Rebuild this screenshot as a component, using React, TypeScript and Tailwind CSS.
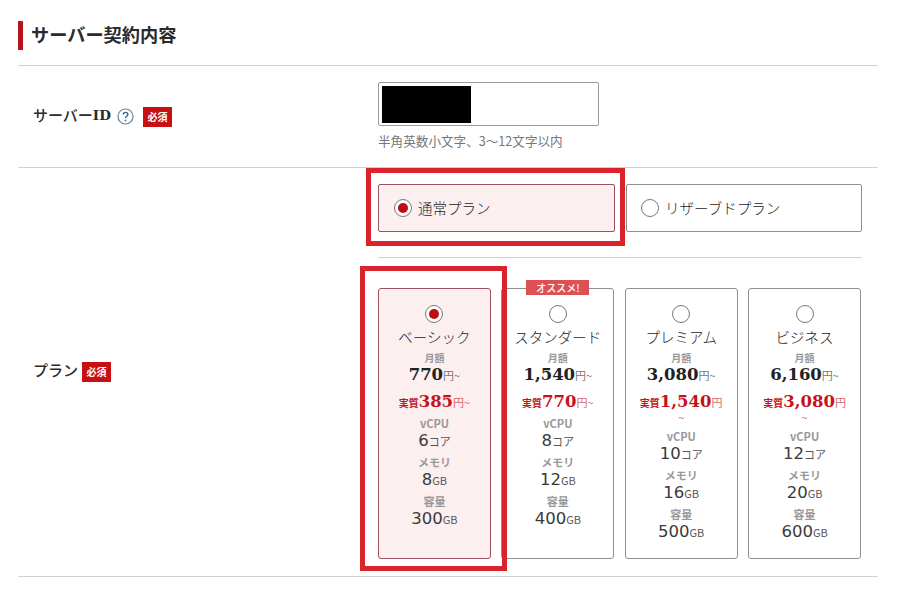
const jp = "font-['Noto_Sans_CJK_JP',sans-serif]";

function Required() {
  return (
    <span className="inline-flex h-[20px] w-[29px] items-center justify-center bg-[#c80f12] text-[10px] font-bold leading-none text-white">
      必須
    </span>
  );
}

function Radio({ checked }: { checked?: boolean }) {
  return (
    <span className="flex h-[18px] w-[18px] shrink-0 items-center justify-center rounded-full border border-[#777] bg-white">
      {checked && <span className="h-[10px] w-[10px] rounded-full bg-[#c00d14]" />}
    </span>
  );
}

type Plan = {
  name: string;
  monthly: string;
  real: string;
  cpu: string;
  mem: string;
  disk: string;
  checked?: boolean;
  badge?: boolean;
  wrapTilde?: boolean;
};

const plans: Plan[] = [
  { name: "ベーシック", monthly: "770", real: "385", cpu: "6", mem: "8", disk: "300", checked: true },
  { name: "スタンダード", monthly: "1,540", real: "770", cpu: "8", mem: "12", disk: "400", badge: true },
  { name: "プレミアム", monthly: "3,080", real: "1,540", cpu: "10", mem: "16", disk: "500", wrapTilde: true },
  { name: "ビジネス", monthly: "6,160", real: "3,080", cpu: "12", mem: "20", disk: "600", wrapTilde: true },
];

function Spec({ label, value, unit }: { label: string; value: string; unit: string }) {
  return (
    <>
      <div className="mt-[3px] h-[17px] text-[11px] font-bold leading-[17px] text-[#999]">{label}</div>
      <div className="h-[19px] whitespace-nowrap font-['DejaVu_Sans',sans-serif] text-[16.5px] leading-[17px] text-[#3a3a3a]">
        {value}
        <span className={`text-[11px] text-[#555] ${jp}`}>{unit}</span>
      </div>
    </>
  );
}

function PlanCard({ plan }: { plan: Plan }) {
  const on = plan.checked;
  return (
    <div
      className={`relative h-[271px] rounded-[3px] border px-[10px] pt-[16px] text-center ${
        on ? "border-[#a0505f] bg-[#fbeff0]" : "border-[#8f8f8f] bg-white"
      }`}
    >
      {plan.badge && (
        <div className="absolute left-[24px] top-[-9px] flex h-[15px] w-[63px] items-center justify-center bg-[#dd5056] text-[10px] font-medium leading-none text-white">
          オススメ!
        </div>
      )}
      <div className="flex justify-center">
        <Radio checked={on} />
      </div>
      <div className="-mx-[6px] mt-[2px] h-[23px] whitespace-nowrap text-[14.5px] font-light leading-[24px] text-[#222]">
        {plan.name}
      </div>
      <div className="mt-[3px] h-[14px] text-[10px] font-bold leading-[14px] text-[#999]">月額</div>
      <div className="-mx-[6px] h-[19px] leading-[17px] text-[#222]">
        <span className="font-['DejaVu_Serif',serif] text-[16.5px] font-bold">{plan.monthly}</span>
        <span className="text-[11px] text-[#777]">円~</span>
      </div>
      <div className="mx-[2px] mt-[11px] pb-[4px] text-[#c4141a]">
        <div className="h-[13px] whitespace-nowrap leading-[11px]">
          <span className="text-[10px] font-bold">実質</span>
          <span className="font-['DejaVu_Serif',serif] text-[16.5px] font-bold">{plan.real}</span>
          <span className="text-[11px] font-normal text-[#d26a6a]">{plan.wrapTilde ? "円" : "円~"}</span>
        </div>
        {plan.wrapTilde && (
          <div className="h-[13px] pt-[5px] text-[11px] font-normal leading-[9px] text-[#d26a6a]">~</div>
        )}
      </div>
      <Spec label="vCPU" value={plan.cpu} unit="コア" />
      <Spec label="メモリ" value={plan.mem} unit="GB" />
      <Spec label="容量" value={plan.disk} unit="GB" />
    </div>
  );
}

export default function App() {
  return (
    <div className={`relative h-[590px] w-[903px] overflow-hidden bg-white pl-[18px] pr-[25px] ${jp}`}>
      <div className="h-[66px] border-b border-[#d2d2d2] pt-[21px]">
        <h2 className="flex h-[29px] items-center border-l-[5px] border-[#b3151c] pb-[3px] pl-[8px] text-[18.2px] font-bold leading-none text-[#2b2b2b]">
          サーバー契約内容
        </h2>
      </div>

      <div className="flex h-[102px] border-b border-[#d2d2d2]">
        <div className="flex w-[360px] items-center pl-[15px]">
          <span className="mb-[2px] text-[15px] font-medium text-[#2b2b2b]">サーバー</span>
          <span className="mb-[2px] font-['DejaVu_Serif',serif] text-[13.5px] font-bold text-[#2b2b2b]">ID</span>
          <svg className="ml-[6px]" width="17" height="17" viewBox="0 0 17 17" fill="none">
            <circle cx="8.5" cy="8.5" r="7.5" stroke="#5f86ad" strokeWidth="1.2" />
            <path d="M6.2 6.6c0-1.4 1-2.2 2.3-2.2s2.3.8 2.3 2c0 1.9-2.3 1.8-2.3 3.7" stroke="#36648f" strokeWidth="1.4" />
            <circle cx="8.5" cy="12.4" r="0.9" fill="#36648f" />
          </svg>
          <span className="ml-[9px] flex">
            <Required />
          </span>
        </div>
        <div className="pt-[16px]">
          <div className="h-[44px] w-[221px] rounded-[2px] border border-[#9a9a9a] p-[3px]">
            <div className="h-[37px] w-[89px] bg-black" />
          </div>
          <div className="mt-[6px] text-[12.6px] leading-[18px] text-[#777]">半角英数小文字、3〜12文字以内</div>
        </div>
      </div>

      <div className="flex h-[409px] border-b border-[#d2d2d2]">
        <div className="flex w-[360px] items-center pl-[15px]">
          <span className="mb-[3px] text-[15px] font-medium text-[#2b2b2b]">プラン</span>
          <span className="ml-[4px] flex">
            <Required />
          </span>
        </div>
        <div className="w-[484px] pt-[16px]">
          <div className="flex h-[74px] gap-[11px] border-b border-[#d2d2d2]">
            <label className="flex h-[48px] w-[237px] items-center gap-[6px] rounded-[2px] border border-[#a0505f] bg-[#fbeff0] pb-[1px] pl-[15px] text-[14.5px] font-light text-[#222]">
              <Radio checked />
              通常プラン
            </label>
            <label className="flex h-[48px] w-[236px] items-center gap-[6px] rounded-[2px] border border-[#8f8f8f] bg-white pb-[1px] pl-[14px] text-[14.5px] font-light text-[#222]">
              <Radio />
              リザーブドプラン
            </label>
          </div>
          <div className="mt-[30px] grid w-[483px] grid-cols-4 gap-[10.5px]">
            {plans.map((p) => (
              <PlanCard key={p.name} plan={p} />
            ))}
          </div>
        </div>
      </div>

      <div className="pointer-events-none absolute left-[366px] top-[168px] h-[78px] w-[259px] border-[5px] border-[#d9232d]" />
      <div className="pointer-events-none absolute left-[360px] top-[266px] h-[305px] w-[147px] border-[5px] border-[#d9232d]" />
    </div>
  );
}
